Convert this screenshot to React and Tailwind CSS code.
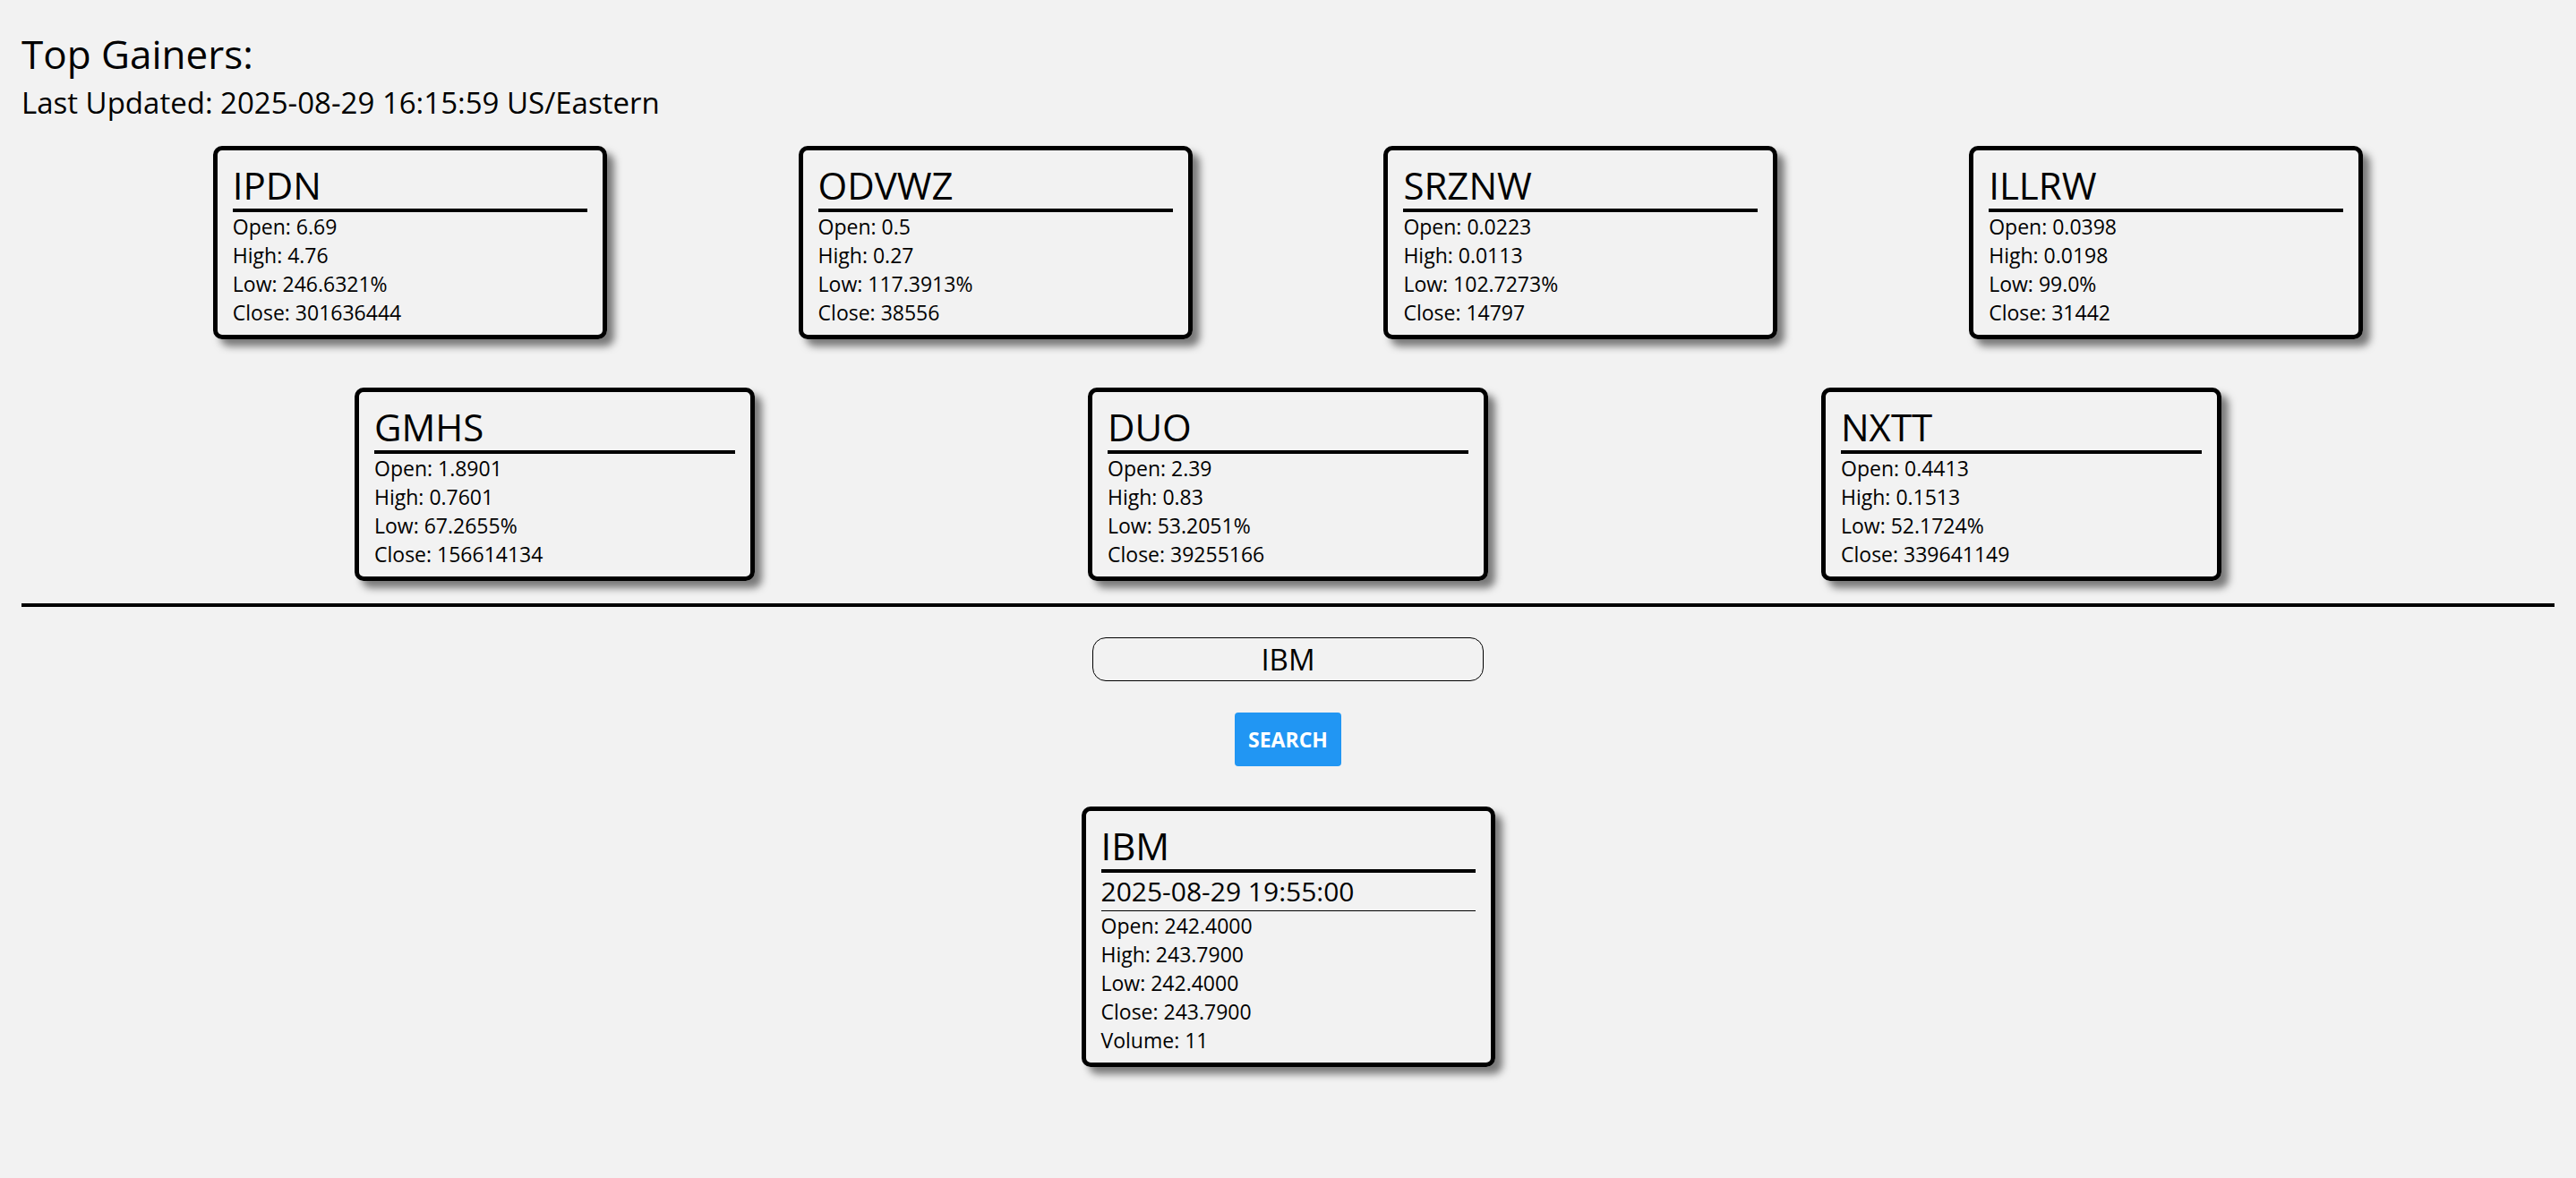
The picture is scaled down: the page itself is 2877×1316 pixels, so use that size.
const gainers = [
  { symbol: 'IPDN', open: '6.69', high: '4.76', low: '246.6321%', close: '301636444' },
  { symbol: 'ODVWZ', open: '0.5', high: '0.27', low: '117.3913%', close: '38556' },
  { symbol: 'SRZNW', open: '0.0223', high: '0.0113', low: '102.7273%', close: '14797' },
  { symbol: 'ILLRW', open: '0.0398', high: '0.0198', low: '99.0%', close: '31442' },
  { symbol: 'GMHS', open: '1.8901', high: '0.7601', low: '67.2655%', close: '156614134' },
  { symbol: 'DUO', open: '2.39', high: '0.83', low: '53.2051%', close: '39255166' },
  { symbol: 'NXTT', open: '0.4413', high: '0.1513', low: '52.1724%', close: '339641149' },
]

function Card({ title, children, className }) {
  return (
    <div
      className={`rounded-[10px] border-[5px] border-black px-[17px] pb-[9px] pt-[14px] shadow-[8px_8px_8px_rgba(0,0,0,0.5)] ${className}`}
    >
      <h2 className="border-b-4 border-black pb-[1px] text-[42px] leading-[50px]">{title}</h2>
      {children}
    </div>
  )
}

function GainerCard({ stock, width }) {
  return (
    <Card title={stock.symbol} className={width}>
      <div className="text-[23px] leading-[32px]">
        <p>Open: {stock.open}</p>
        <p>High: {stock.high}</p>
        <p>Low: {stock.low}</p>
        <p>Close: {stock.close}</p>
      </div>
    </Card>
  )
}

export default function App() {
  return (
    <div className="min-h-screen bg-[#f2f2f2] px-6 pt-[34px] font-['Open_Sans',sans-serif] text-black">
      <h1 className="text-[44px] leading-[52px]">Top Gainers:</h1>
      <p className="mt-[7px] text-[33px] leading-[44px]">Last Updated: 2025-08-29 16:15:59 US/Eastern</p>

      <div className="mt-[26px] flex justify-evenly">
        {gainers.slice(0, 4).map((s) => (
          <GainerCard key={s.symbol} stock={s} width="w-[440px]" />
        ))}
      </div>
      <div className="mt-[54px] flex justify-evenly">
        {gainers.slice(4).map((s) => (
          <GainerCard key={s.symbol} stock={s} width="w-[447px]" />
        ))}
      </div>

      <hr className="mt-[25px] border-t-4 border-black" />

      <div className="flex flex-col items-center">
        <input
          defaultValue="IBM"
          className="mt-[34px] h-[49px] w-[437px] rounded-[15px] border border-black bg-transparent text-center text-[33px] leading-[47px] outline-none"
        />
        <button className="mt-[35px] h-[60px] w-[119px] rounded-[4px] bg-[#2196f3] text-[23px] font-bold text-white">
          SEARCH
        </button>

        <Card title="IBM" className="mt-[45px] w-[462px]">
          <h3 className="border-b border-black text-[30px] leading-[42px]">2025-08-29 19:55:00</h3>
          <div className="text-[23px] leading-[32px]">
            <p>Open: 242.4000</p>
            <p>High: 243.7900</p>
            <p>Low: 242.4000</p>
            <p>Close: 243.7900</p>
            <p>Volume: 11</p>
          </div>
        </Card>
      </div>
    </div>
  )
}
